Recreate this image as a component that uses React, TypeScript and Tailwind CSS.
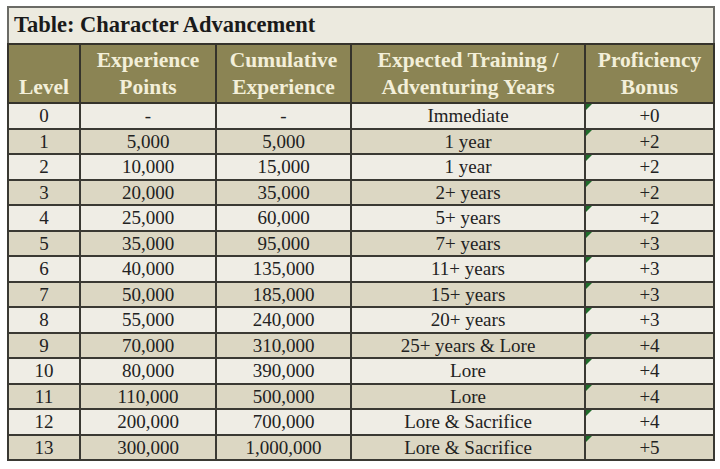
import * as React from "react";

const rows: [string, string, string, string, string][] = [
  ["0", "-", "-", "Immediate", "+0"],
  ["1", "5,000", "5,000", "1 year", "+2"],
  ["2", "10,000", "15,000", "1 year", "+2"],
  ["3", "20,000", "35,000", "2+ years", "+2"],
  ["4", "25,000", "60,000", "5+ years", "+2"],
  ["5", "35,000", "95,000", "7+ years", "+3"],
  ["6", "40,000", "135,000", "11+ years", "+3"],
  ["7", "50,000", "185,000", "15+ years", "+3"],
  ["8", "55,000", "240,000", "20+ years", "+3"],
  ["9", "70,000", "310,000", "25+ years & Lore", "+4"],
  ["10", "80,000", "390,000", "Lore", "+4"],
  ["11", "110,000", "500,000", "Lore", "+4"],
  ["12", "200,000", "700,000", "Lore & Sacrifice", "+4"],
  ["13", "300,000", "1,000,000", "Lore & Sacrifice", "+5"],
];

const serif = { fontFamily: '"Liberation Serif", "Times New Roman", serif' };

export default function App() {
  return (
    <div className="h-[469px] w-[720px] overflow-hidden bg-white pl-[7px] pt-[6px]" style={serif}>
      <table className="w-[706px] table-fixed border-collapse border-2 border-[#6b6b66]">
        <colgroup>
          <col className="w-[72px]" />
          <col className="w-[136px]" />
          <col className="w-[135px]" />
          <col className="w-[234px]" />
          <col className="w-[129px]" />
        </colgroup>
        <thead>
          <tr className="h-[37px] bg-[#eceadf]">
            <th colSpan={5} className="px-[5px] text-left align-middle text-[22.5px] font-bold leading-none text-[#1a1a1a]">
              Table: Character Advancement
            </th>
          </tr>
          <tr className="h-[59px] bg-[#8b8454] text-[21.5px] font-bold leading-[27px] text-[#f3efd9]">
            <th className="border-2 border-[#35332b] pb-[1px] align-bottom">Level</th>
            <th className="border-2 border-[#35332b] pb-[1px] align-bottom">Experience<br />Points</th>
            <th className="border-2 border-[#35332b] pb-[1px] align-bottom">Cumulative<br />Experience</th>
            <th className="border-2 border-[#35332b] pb-[1px] align-bottom">Expected Training /<br />Adventuring Years</th>
            <th className="border-2 border-[#35332b] pb-[1px] align-bottom">Proficiency<br />Bonus</th>
          </tr>
        </thead>
        <tbody className="text-[19px] leading-none text-[#222]">
          {rows.map((r, i) => (
            <tr key={r[0]} className={i % 2 === 0 ? "h-[25.5px] bg-[#efede5]" : "h-[25.5px] bg-[#dcd7c3]"}>
              <td className="border-2 border-[#3a3933] text-center">{r[0]}</td>
              <td className="border-2 border-[#3a3933] text-center">{r[1]}</td>
              <td className="border-2 border-[#3a3933] text-center">{r[2]}</td>
              <td className="border-2 border-[#3a3933] text-center">{r[3]}</td>
              <td className="relative border-2 border-[#3a3933] text-center">
                <span className="absolute left-0 top-0 h-0 w-0 border-r-[6px] border-t-[6px] border-r-transparent border-t-[#1f6b2a]" />
                {r[4]}
              </td>
            </tr>
          ))}
        </tbody>
      </table>
    </div>
  );
}
